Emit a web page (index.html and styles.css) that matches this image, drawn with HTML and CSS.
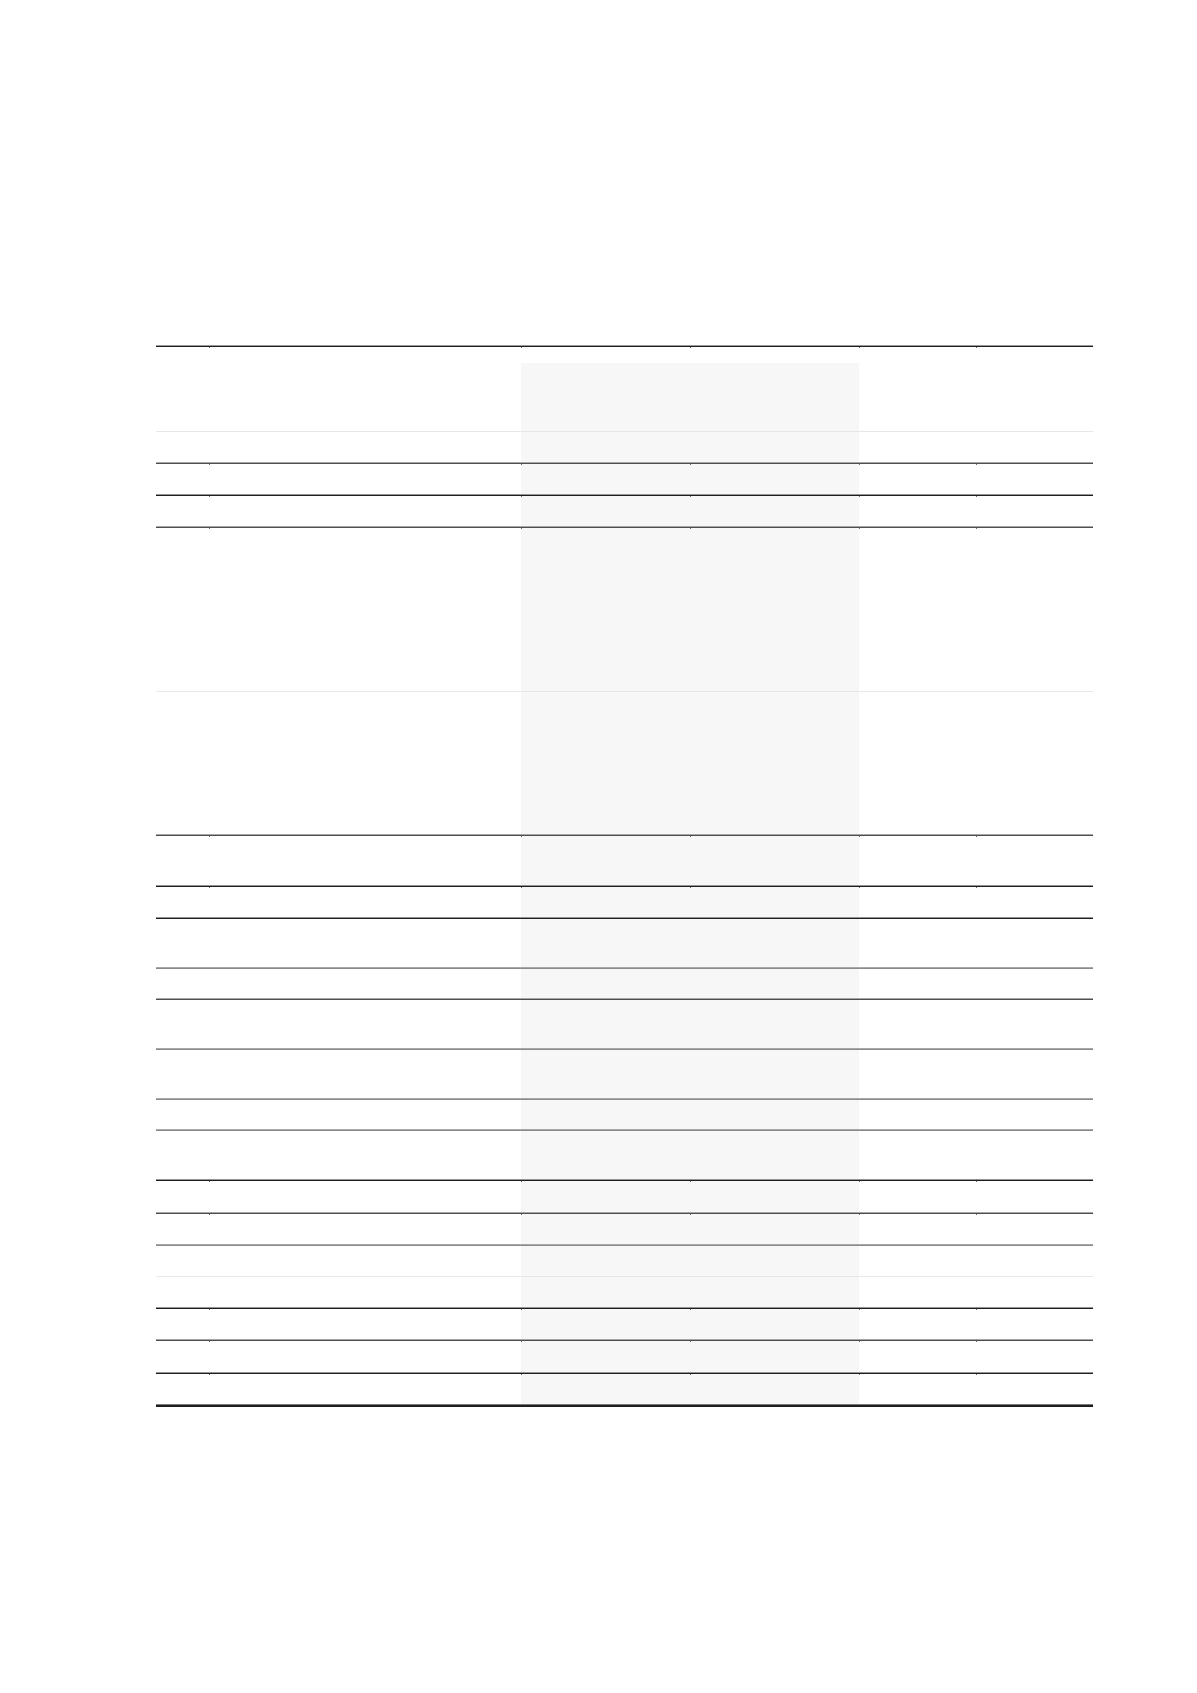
FILE: index.html
```html
<!DOCTYPE html>
<html lang="en">
<head>
<meta charset="utf-8">
<title>Table</title>
<link rel="stylesheet" href="styles.css">
</head>
<body>
<main class="page">
  <div class="tbl">
    <div class="row h16 tk"><div class="c"></div><div class="c"></div><div class="c"></div><div class="c"></div><div class="c"></div><div class="c"></div></div>
    <div class="row h69 lt sh"><div class="c"></div><div class="c"></div><div class="c"></div><div class="c"></div><div class="c"></div><div class="c"></div></div>
    <div class="row h32 md sh"><div class="c"></div><div class="c"></div><div class="c"></div><div class="c"></div><div class="c"></div><div class="c"></div></div>
    <div class="row h32 dk sh tk"><div class="c"></div><div class="c"></div><div class="c"></div><div class="c"></div><div class="c"></div><div class="c"></div></div>
    <div class="row h32 md sh tk"><div class="c"></div><div class="c"></div><div class="c"></div><div class="c"></div><div class="c"></div><div class="c"></div></div>
    <div class="row h164 lt sh tk"><div class="c"></div><div class="c"></div><div class="c"></div><div class="c"></div><div class="c"></div><div class="c"></div></div>
    <div class="row h144 md sh"><div class="c"></div><div class="c"></div><div class="c"></div><div class="c"></div><div class="c"></div><div class="c"></div></div>
    <div class="row h51 dk sh tk"><div class="c"></div><div class="c"></div><div class="c"></div><div class="c"></div><div class="c"></div><div class="c"></div></div>
    <div class="row h32 dk sh tk"><div class="c"></div><div class="c"></div><div class="c"></div><div class="c"></div><div class="c"></div><div class="c"></div></div>
    <div class="row h50 gr sh"><div class="c"></div><div class="c"></div><div class="c"></div><div class="c"></div><div class="c"></div><div class="c"></div></div>
    <div class="row h31 md sh"><div class="c"></div><div class="c"></div><div class="c"></div><div class="c"></div><div class="c"></div><div class="c"></div></div>
    <div class="row h50 gr sh"><div class="c"></div><div class="c"></div><div class="c"></div><div class="c"></div><div class="c"></div><div class="c"></div></div>
    <div class="row h50 gr sh"><div class="c"></div><div class="c"></div><div class="c"></div><div class="c"></div><div class="c"></div><div class="c"></div></div>
    <div class="row h31 gr sh"><div class="c"></div><div class="c"></div><div class="c"></div><div class="c"></div><div class="c"></div><div class="c"></div></div>
    <div class="row h50 dk sh"><div class="c"></div><div class="c"></div><div class="c"></div><div class="c"></div><div class="c"></div><div class="c"></div></div>
    <div class="row h33 md sh tk"><div class="c"></div><div class="c"></div><div class="c"></div><div class="c"></div><div class="c"></div><div class="c"></div></div>
    <div class="row h32 gr sh tk"><div class="c"></div><div class="c"></div><div class="c"></div><div class="c"></div><div class="c"></div><div class="c"></div></div>
    <div class="row h31 lt sh"><div class="c"></div><div class="c"></div><div class="c"></div><div class="c"></div><div class="c"></div><div class="c"></div></div>
    <div class="row h32 dk sh"><div class="c"></div><div class="c"></div><div class="c"></div><div class="c"></div><div class="c"></div><div class="c"></div></div>
    <div class="row h32 md sh tk"><div class="c"></div><div class="c"></div><div class="c"></div><div class="c"></div><div class="c"></div><div class="c"></div></div>
    <div class="row h33 dk sh tk"><div class="c"></div><div class="c"></div><div class="c"></div><div class="c"></div><div class="c"></div><div class="c"></div></div>
    <div class="row h33 bt sh tk"><div class="c"></div><div class="c"></div><div class="c"></div><div class="c"></div><div class="c"></div><div class="c"></div></div>
  </div>
</main>
</body>
</html>
```
FILE: styles.css
```css
html, body {
  margin: 0;
  padding: 0;
  background: #ffffff;
  font-family: "Liberation Sans", Arial, sans-serif;
  color: #222;
}

.page {
  padding: 346px 0 280px 156px;
}

.tbl {
  width: 937px;
  border-top: 1px solid #1f1f1f;
  box-shadow: 0 -1px 0 #9a9a9a;
}

.row {
  display: grid;
  grid-template-columns: 53px 312px 169px 169px 117px 117px;
  box-sizing: border-box;
}

.c {
  min-width: 0;
}

/* row heights (border-box, including the rule below) */
.h16 { height: 16px; }
.h31 { height: 31px; }
.h32 { height: 32px; }
.h33 { height: 33px; }
.h50 { height: 50px; }
.h51 { height: 51px; }
.h69 { height: 69px; }
.h144 { height: 144px; }
.h164 { height: 164px; }

/* shaded middle columns */
.sh > .c:nth-child(3),
.sh > .c:nth-child(4) {
  background-color: #f7f7f7;
}

/* rules */
.dk { border-bottom: 1px solid #1e1e1e; }
.dk > .c { box-shadow: inset 0 -1px 0 #959595; }

.md { border-bottom: 1px solid #4e4e4e; }
.md > .c { box-shadow: inset 0 -1px 0 #a6a6a6; }

.gr { border-bottom: 1px solid #8a8a8a; }
.gr > .c { box-shadow: inset 0 -1px 0 #a8a8a8; }

.lt { border-bottom: 1px solid #e7e7e7; }

.bt { border-bottom: 2px solid #1e1e1e; }
.bt > .c { box-shadow: inset 0 -1px 0 #7a7a7a; }

/* small joint marks where column edges meet a rule */
.tk > .c + .c {
  background-image: linear-gradient(#6a6a6a, #6a6a6a);
  background-size: 1px 1px;
  background-position: 0 0;
  background-repeat: no-repeat;
}
```
